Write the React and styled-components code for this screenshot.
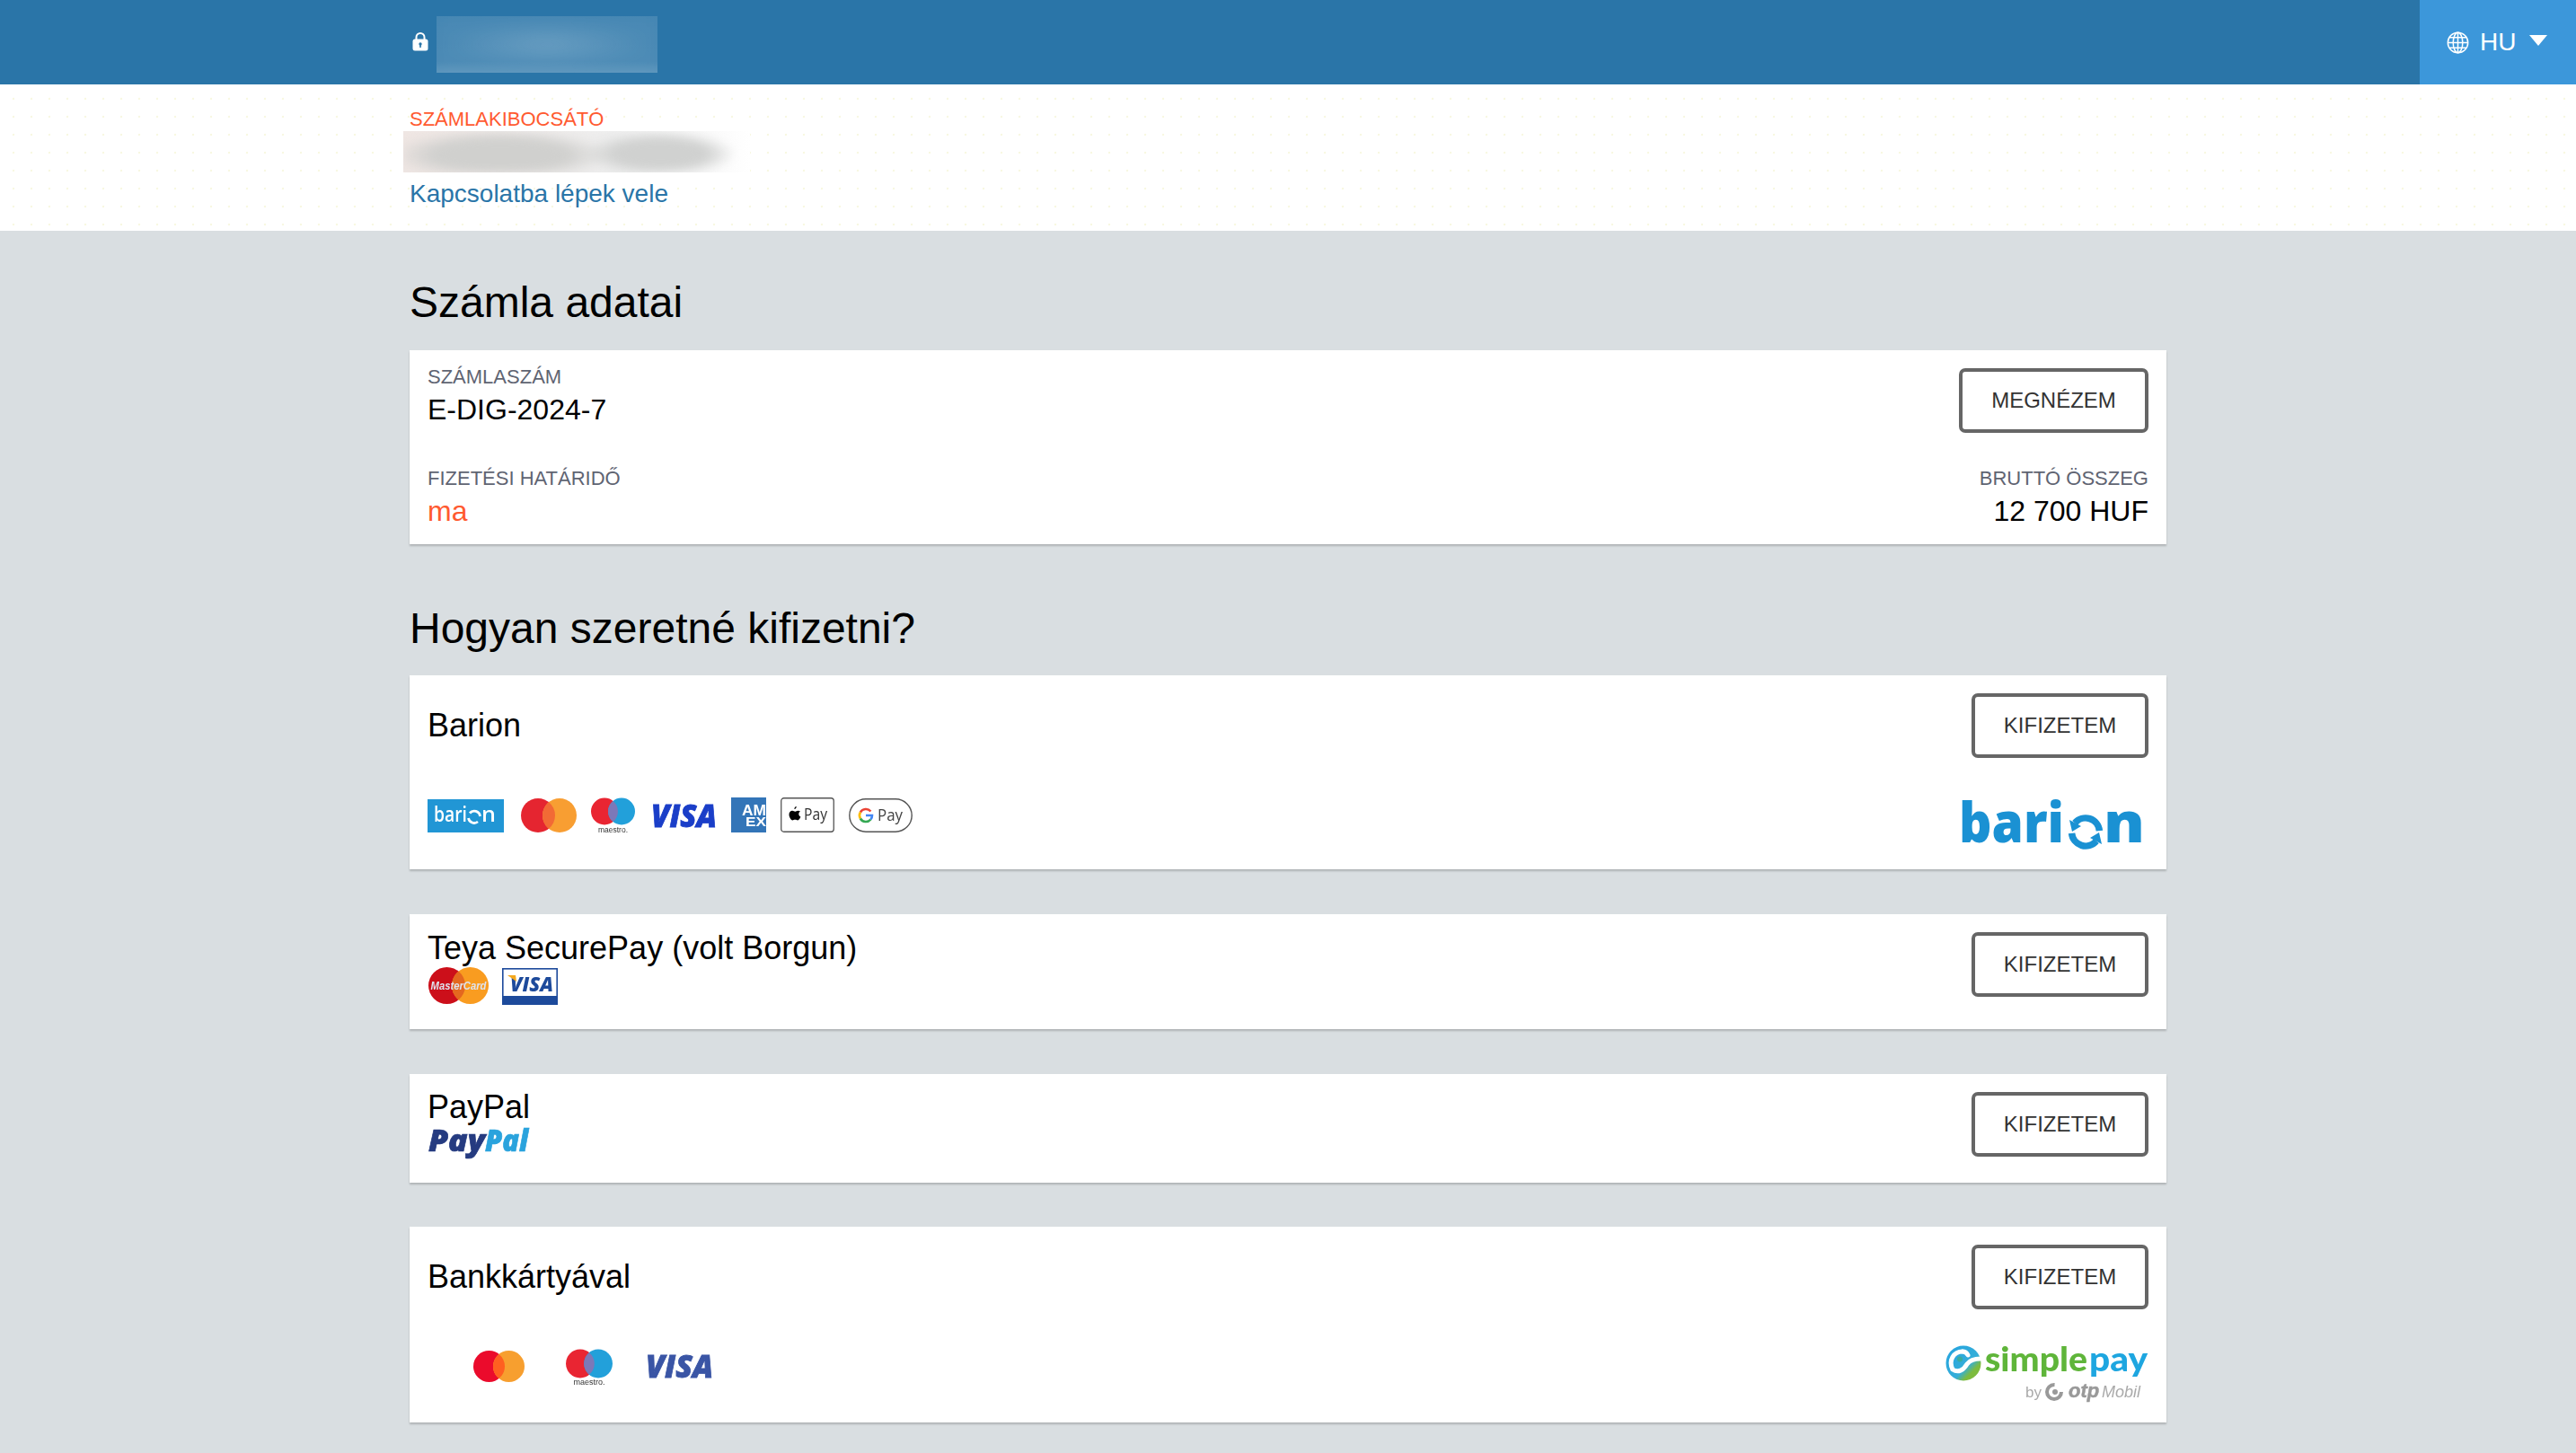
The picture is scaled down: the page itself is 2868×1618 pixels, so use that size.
import React from "react";
import styled, { createGlobalStyle } from "styled-components";

const FONT = '"Liberation Sans", Arial, sans-serif';
const OPEN = '"Open Sans", sans-serif';

const Global = createGlobalStyle`
  html, body { margin: 0; padding: 0; background: #d9dee1; }
  body { font-family: ${FONT}; color: #000; }
  * { box-sizing: border-box; }
`;

const Page = styled.div`
  min-height: 1618px;
  background: #d9dee1;
`;
const TopBar = styled.header`
  height: 94px;
  background: #2a75a8;
  display: flex;
  justify-content: space-between;
`;
const TopLeft = styled.div`
  display: flex;
  align-items: flex-start;
  margin-left: 459px;
  gap: 9px;
`;
const LockIcon = styled.svg`
  width: 18px;
  height: 22px;
  margin-top: 35px;
`;
const BlurShell = styled.div`
  overflow: hidden;
  flex: none;
  width: ${(p) => p.$w}px;
  height: ${(p) => p.$h}px;
  margin-top: ${(p) => p.$top || 0}px;
  background: ${(p) => p.$bg};
`;
const BlurInk = styled.div`
  width: 100%;
  height: 100%;
  background: ${(p) => p.$ink};
  filter: blur(${(p) => p.$blur}px);
`;
const LangButton = styled.div`
  width: 174px;
  background: #3c97da;
  color: #fff;
  display: flex;
  align-items: center;
  padding: 0 32px 0 30px;
  font-size: 28px;
  gap: 12px;
`;
const Caret = styled.span`
  width: 0;
  height: 0;
  border-left: 10px solid transparent;
  border-right: 10px solid transparent;
  border-top: 12px solid #fff;
  margin: 0 0 4px 3px;
`;
const IssuerBand = styled.section`
  height: 163px;
  background-color: #fff;
  background-image: radial-gradient(circle, #f8f8e2 1.3px, transparent 1.6px);
  background-size: 20px 20px;
  background-position: 5px 6px;
  padding: 26px 0 0 456px;
`;
const IssuerLabel = styled.div`
  font-size: 22px;
  line-height: 26px;
  color: #ff5a30;
`;
const IssuerBlur = styled.div`
  margin: 0 0 0 -7px;
`;
const ContactLink = styled.a`
  display: block;
  font-size: 28px;
  line-height: 34px;
  margin-top: 7px;
  color: #2a75a8;
`;
const Main = styled.main`
  width: 1956px;
  margin: 0 auto;
`;
const Heading = styled.h2`
  margin: 0;
  font-weight: 400;
  font-size: 48px;
  line-height: 54px;
  padding: ${(p) => p.$top}px 0 ${(p) => p.$bottom}px;
`;
const Card = styled.section`
  background: #fff;
  box-shadow: 0 2px 2px rgba(0, 0, 0, 0.2);
  padding: 20px;
  margin-bottom: ${(p) => p.$after || 0}px;
`;
const Row = styled.div`
  display: flex;
  justify-content: space-between;
  align-items: flex-start;
  margin-top: ${(p) => p.$top || 0}px;
`;
const Field = styled.div`
  display: flex;
  flex-direction: column;
  align-items: ${(p) => (p.$right ? "flex-end" : "flex-start")};
`;
const FieldLabel = styled.div`
  font-size: 22px;
  line-height: 20px;
  color: #5f6472;
`;
const FieldValue = styled.div`
  font-size: 32px;
  line-height: 34px;
  margin-top: 9px;
  color: ${(p) => p.$color || "#000"};
`;
const ActionButton = styled.button`
  flex: none;
  width: ${(p) => p.$w}px;
  height: 72px;
  background: #fff;
  border: 4px solid #666;
  border-radius: 7px;
  color: #333;
  font-family: ${FONT};
  font-size: 24px;
  padding: 0;
`;
const MethodText = styled.div`
  display: flex;
  flex-direction: column;
  align-items: flex-start;
`;
const MethodTitle = styled.div`
  font-size: 36px;
  line-height: ${(p) => p.$lh || 36}px;
`;
const IconStrip = styled.div`
  display: flex;
  align-items: flex-start;
  margin: ${(p) => p.$top || 0}px 0 ${(p) => p.$bottom || 0}px ${(p) => p.$left || 0}px;
  gap: ${(p) => p.$gap || 0}px;
`;
const Graphic = styled.svg`
  display: block;
  flex: none;
  overflow: visible;
  margin-left: ${(p) => p.$left || 0}px;
  margin-top: ${(p) => p.$top || 0}px;
  filter: blur(${(p) => p.$soft || 0}px);
`;

const Lock = () => (
  <LockIcon viewBox="0 0 18 22">
    <path d="M4.500 9V6.500a4.500 4.500 0 0 1 9 0V9" fill="none" stroke="#fff" strokeWidth="2" />
    <rect x="0.500" y="8.500" width="17" height="13" rx="2.500" fill="#fff" />
    <circle cx="9" cy="14" r="1.700" fill="#2a75a8" />
    <rect x="8.200" y="14" width="1.600" height="4" fill="#2a75a8" />
  </LockIcon>
);

const Globe = () => (
  <svg width="25" height="25" viewBox="0 0 25 25" fill="none" stroke="#fff" strokeWidth="1.500" style={{ flex: "none" }}>
    <circle cx="12.500" cy="12.500" r="11.200" />
    <ellipse cx="12.500" cy="12.500" rx="5.300" ry="11.200" />
    <path d="M12.500 1.300v22.400M1.300 12.500h22.400M3 6.800h19M3 18.200h19" />
  </svg>
);

const MasterCard = ({ w, h, c1, c2, mid, left, top }) => {
  const r = h / 2;
  const half = (w - 2 * r) / 2;
  const ch = Math.sqrt(r * r - half * half);
  return (
    <Graphic width={w} height={h} viewBox={`0 0 ${w} ${h}`} $left={left} $top={top}>
      <circle cx={r} cy={r} r={r} fill={c1} />
      <circle cx={w - r} cy={r} r={r} fill={c2} />
      <path d={`M${w / 2} ${r - ch}A${r} ${r} 0 0 1 ${w / 2} ${r + ch}A${r} ${r} 0 0 1 ${w / 2} ${r - ch}z`} fill={mid} />
    </Graphic>
  );
};

const Maestro = ({ w, h, vb, ty }) => (
  <Graphic width={w} height={h} viewBox={`0 0 49 ${vb}`} $top={1}>
    <circle cx="15" cy="14.500" r="15" fill="#e92532" />
    <circle cx="34" cy="14.500" r="15" fill="#22a0da" />
    <path d="M24.500 2.900a15 15 0 0 1 0 23.200a15 15 0 0 1 0-23.200z" fill="#7c78b8" />
    <text x="24.500" y={ty} textAnchor="middle" fontFamily={FONT} fontSize="8.500" fill="#333" textLength="33" lengthAdjust="spacingAndGlyphs">maestro.</text>
  </Graphic>
);

const VisaMark = ({ w, color, top }) => (
  <Graphic width={w} height="26" viewBox="0 0 76 26" preserveAspectRatio="none" $top={top}>
    <text x="2" y="25" fontFamily={OPEN} fontWeight="800" fontStyle="italic" fontSize="35" fill={color} stroke={color} strokeWidth="0.800" textLength="73" lengthAdjust="spacingAndGlyphs">VISA</text>
  </Graphic>
);

const BarionBadge = () => (
  <Graphic width="85" height="37" viewBox="0 0 85 37" $top={2}>
    <rect width="85" height="37" fill="#2196d5" />
    <text x="7" y="25" fontFamily={OPEN} fontWeight="600" fontSize="23" fill="#fff" textLength="37" lengthAdjust="spacingAndGlyphs">bari</text>
    <path d="M47 15.500A6.500 6.500 0 0 1 58.500 19M56 25A6.500 6.500 0 0 1 45.500 21" fill="none" stroke="#fff" strokeWidth="2.800" />
    <text x="60" y="25" fontFamily={OPEN} fontWeight="600" fontSize="23" fill="#fff" textLength="16" lengthAdjust="spacingAndGlyphs">n</text>
  </Graphic>
);

const Amex = () => (
  <Graphic width="39" height="39" viewBox="0 0 39 39" $left={-1}>
    <rect width="39" height="39" fill="#3375b8" />
    <text x="12" y="20" fontFamily={FONT} fontWeight="700" fontSize="16" fill="#fff" textLength="27" lengthAdjust="spacingAndGlyphs">AM</text>
    <text x="16" y="32" fontFamily={FONT} fontWeight="700" fontSize="14" fill="#fff" textLength="23" lengthAdjust="spacingAndGlyphs">EX</text>
  </Graphic>
);

const ApplePay = () => (
  <Graphic width="60" height="39" viewBox="0 0 60 39">
    <rect x="0.750" y="0.750" width="58.500" height="37.500" rx="3" fill="#fff" stroke="#555" strokeWidth="1.300" />
    <g transform="translate(4 -0.500)">
      <path d="M15.600 15.200c-1.700 0-2.200 1-3.300 1s-1.800-1-3.200-1c-2 0-3.600 1.800-3.600 4.400 0 3 2.200 6.400 3.800 6.400 1.100 0 1.400-.7 2.900-.7s1.800.7 2.900.7c1.400 0 2.800-2.500 3.300-4-1.300-.6-2.100-1.700-2.100-3.100 0-1.200.6-2.200 1.700-2.800-.6-.6-1.500-.9-2.400-.9zM13.700 10.500c-1.300.2-2.500 1.500-2.300 3 1.400 0 2.500-1.500 2.300-3z" fill="#000" />
    </g>
    <text x="26" y="25" fontFamily={OPEN} fontSize="18" fill="#333" textLength="26" lengthAdjust="spacingAndGlyphs">Pay</text>
  </Graphic>
);

const GooglePay = () => (
  <Graphic width="71" height="38" viewBox="0 0 71 38" $top={1}>
    <rect x="0.800" y="0.800" width="69.400" height="36.400" rx="18.200" fill="#fff" stroke="#555" strokeWidth="1.400" />
    <g fill="none" strokeWidth="2.600" transform="translate(1 -3)">
      <path d="M23.400 17.500A7 7 0 0 0 11.900 18.500" stroke="#ea4335" />
      <path d="M11.900 18.500A7 7 0 0 0 11.900 25.500" stroke="#fbbc05" />
      <path d="M11.900 25.500A7 7 0 0 0 23.400 26.500" stroke="#34a853" />
      <path d="M18 22H25A7 7 0 0 1 23.400 26.500" stroke="#4285f4" />
    </g>
    <text x="32" y="25" fontFamily={OPEN} fontSize="19" fill="#444" textLength="28" lengthAdjust="spacingAndGlyphs">Pay</text>
  </Graphic>
);

const BarionLogo = () => (
  <Graphic width="207" height="60" viewBox="0 0 207 60">
    <text x="-4" y="50" fontFamily={OPEN} fontWeight="800" fontSize="62" fill="#1a91d3" textLength="117" lengthAdjust="spacingAndGlyphs">bari</text>
    <path d="M125.100 28.500A15.500 15.500 0 0 1 152.400 37.100M148.900 48.500A15.500 15.500 0 0 1 121.600 39.900" fill="none" stroke="#1a91d3" strokeWidth="7.500" />
    <path d="M119 25l13 7-10 6zM155 52l-13-7 10-6z" fill="#1a91d3" />
    <text x="157" y="50" fontFamily={OPEN} fontWeight="800" fontSize="62" fill="#1a91d3" textLength="46" lengthAdjust="spacingAndGlyphs">n</text>
  </Graphic>
);

const TeyaMaster = () => (
  <Graphic width="67" height="41" viewBox="0 0 67 41" $soft={0.4}>
    <circle cx="20.500" cy="20.500" r="20.500" fill="#cc0f1a" />
    <circle cx="46.500" cy="20.500" r="20.500" fill="#f99c20" />
    <path d="M33.500 4.600a20.500 20.500 0 0 1 0 31.800a20.500 20.500 0 0 1 0-31.800z" fill="#e4681f" />
    <text x="33.500" y="25" textAnchor="middle" fontFamily={FONT} fontWeight="700" fontStyle="italic" fontSize="12" fill="#dfe3ee" textLength="62" lengthAdjust="spacingAndGlyphs">MasterCard</text>
  </Graphic>
);

const TeyaVisa = () => (
  <Graphic width="62" height="41" viewBox="0 0 62 41" $left={15} $top={1} $soft={0.4}>
    <rect x="0.800" y="0.800" width="60.400" height="39.400" fill="#fff" stroke="#1d4a9b" strokeWidth="1.600" />
    <rect y="31" width="62" height="10" fill="#1d4a9b" />
    <text x="9" y="26" fontFamily={OPEN} fontWeight="800" fontStyle="italic" fontSize="23" fill="#1d4a9b" textLength="48" lengthAdjust="spacingAndGlyphs">VISA</text>
    <path d="M6 8h9l1 7z" fill="#f4a81d" />
  </Graphic>
);

const PayPalLogo = () => (
  <Graphic width="111" height="40" viewBox="0 0 111 40" $left={1} $top={8} $soft={0.5}>
    <text x="0" y="25" fontFamily={OPEN} fontWeight="800" fontStyle="italic" fontSize="33" fill="#253b80" stroke="#253b80" strokeWidth="0.700" textLength="63" lengthAdjust="spacingAndGlyphs">Pay</text>
    <text x="63" y="25" fontFamily={OPEN} fontWeight="800" fontStyle="italic" fontSize="33" fill="#2aa3dd" stroke="#2aa3dd" strokeWidth="0.700" textLength="48" lengthAdjust="spacingAndGlyphs">Pal</text>
  </Graphic>
);

const SimplePayLogo = () => (
  <Graphic width="226" height="66" viewBox="0 0 226 66" $top={-4}>
    <defs>
      <linearGradient id="sp" x1="0" y1="0" x2="1" y2="1">
        <stop offset="0.1" stopColor="#27a5df" />
        <stop offset="0.6" stopColor="#35aed8" />
        <stop offset="0.75" stopColor="#7dbb3e" />
      </linearGradient>
    </defs>
    <circle cx="20" cy="20" r="19.500" fill="url(#sp)" />
    <path d="M8 27C3 17 9 7 19 7M8 27c6 4 12 1 16-6 3-4 7-6 15-6" fill="none" stroke="#fff" strokeWidth="5" strokeLinecap="round" />
    <path d="M19 7c3 0 5 2 6 4" fill="none" stroke="#fff" strokeWidth="5" strokeLinecap="round" />
    <circle cx="16" cy="15.500" r="3" fill="#3cab9e" />
    <text x="44" y="29" fontFamily="Lato, sans-serif" fontWeight="900" fontSize="38" fill="#5fb53a" textLength="114" lengthAdjust="spacingAndGlyphs">simple</text>
    <text x="160" y="29" fontFamily="Lato, sans-serif" fontWeight="900" fontSize="38" fill="#1ea6e0" textLength="65" lengthAdjust="spacingAndGlyphs">pay</text>
    <text x="89" y="58" fontFamily={FONT} fontSize="17" fill="#aaa">by</text>
    <circle cx="121" cy="52" r="8" fill="none" stroke="#999" strokeWidth="4" strokeDasharray="38 12" />
    <circle cx="122" cy="52" r="3" fill="#999" />
    <text x="137" y="58" fontFamily={FONT} fontWeight="700" fontStyle="italic" fontSize="22" fill="#999" stroke="#999" strokeWidth="0.500">otp</text>
    <text x="174" y="58" fontFamily={FONT} fontStyle="italic" fontSize="18" fill="#aaa">Mobil</text>
  </Graphic>
);

const App = () => (
  <Page>
    <Global />
    <TopBar>
      <TopLeft>
        <Lock />
        <BlurShell $w={246} $h={63} $top={18} $bg="linear-gradient(180deg, rgba(255,255,255,0.12), rgba(255,255,255,0.14) 80%, rgba(255,255,255,0.24))">
          <BlurInk $blur={9} $ink="radial-gradient(ellipse 46% 38% at 50% 50%, rgba(255,255,255,0.2), rgba(255,255,255,0.03))" />
        </BlurShell>
      </TopLeft>
      <LangButton>
        <Globe />
        <span>HU</span>
        <Caret />
      </LangButton>
    </TopBar>
    <IssuerBand>
      <IssuerLabel>SZÁMLAKIBOCSÁTÓ</IssuerLabel>
      <IssuerBlur>
        <BlurShell $w={386} $h={46} $bg="linear-gradient(90deg, #efe6e3 0%, #eeeeee 60%, #ffffff 100%)">
          <BlurInk $blur={5} $ink="radial-gradient(ellipse 32% 62% at 28% 58%, #d0d0ce 60%, transparent 100%), radial-gradient(ellipse 22% 55% at 74% 55%, #d0d1d0 60%, transparent 100%)" />
        </BlurShell>
      </IssuerBlur>
      <ContactLink>Kapcsolatba lépek vele</ContactLink>
    </IssuerBand>
    <Main>
      <Heading $top={53} $bottom={26}>Számla adatai</Heading>
      <Card>
        <Row>
          <Field>
            <FieldLabel>SZÁMLASZÁM</FieldLabel>
            <FieldValue>E-DIG-2024-7</FieldValue>
          </Field>
          <ActionButton $w={211}>MEGNÉZEM</ActionButton>
        </Row>
        <Row $top={41}>
          <Field>
            <FieldLabel>FIZETÉSI HATÁRIDŐ</FieldLabel>
            <FieldValue $color="#ff5a30">ma</FieldValue>
          </Field>
          <Field $right>
            <FieldLabel>BRUTTÓ ÖSSZEG</FieldLabel>
            <FieldValue>12 700 HUF</FieldValue>
          </Field>
        </Row>
      </Card>
      <Heading $top={67} $bottom={25}>Hogyan szeretné kifizetni?</Heading>
      <Card $after={50}>
        <Row>
          <MethodTitle $lh={72}>Barion</MethodTitle>
          <ActionButton $w={197}>KIFIZETEM</ActionButton>
        </Row>
        <Row $top={44}>
          <IconStrip $gap={16}>
            <BarionBadge />
            <MasterCard w={62} h={38} left={3} top={1} c1="#e52530" c2="#f89e32" mid="#f26a35" />
            <Maestro w={49} h={39} vb={39} ty={38} />
            <VisaMark w={76} color="#1a3ec8" top={8} />
            <Amex />
            <ApplePay />
            <GooglePay />
          </IconStrip>
          <BarionLogo />
        </Row>
      </Card>
      <Card $after={50}>
        <Row>
          <MethodText>
            <MethodTitle $lh={35}>Teya SecurePay (volt Borgun)</MethodTitle>
            <IconStrip $left={1} $top={4} $bottom={7}>
              <TeyaMaster />
              <TeyaVisa />
            </IconStrip>
          </MethodText>
          <ActionButton $w={197}>KIFIZETEM</ActionButton>
        </Row>
      </Card>
      <Card $after={49}>
        <Row>
          <MethodText>
            <MethodTitle $lh={33}>PayPal</MethodTitle>
            <PayPalLogo />
          </MethodText>
          <ActionButton $w={197}>KIFIZETEM</ActionButton>
        </Row>
      </Card>
      <Card>
        <Row>
          <MethodTitle $lh={72}>Bankkártyával</MethodTitle>
          <ActionButton $w={197}>KIFIZETEM</ActionButton>
        </Row>
        <Row $top={44}>
          <IconStrip $left={51} $gap={46}>
            <MasterCard w={57} h={35} top={2} c1="#eb0b2c" c2="#f79f2f" mid="#ff5f20" />
            <IconStrip $gap={35}>
              <Maestro w={52} h={41} vb={38.500} ty={37} />
              <VisaMark w={78} color="#3a55a5" top={7} />
            </IconStrip>
          </IconStrip>
          <SimplePayLogo />
        </Row>
      </Card>
    </Main>
  </Page>
);

export default App;
